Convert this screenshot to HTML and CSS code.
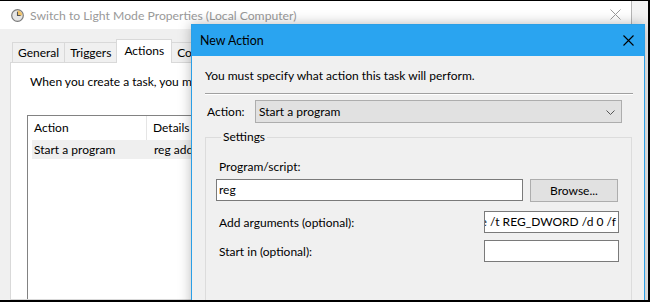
FILE: index.html
```html
<!DOCTYPE html>
<html>
<head>
<meta charset="utf-8">
<link rel="stylesheet" href="styles.css">
</head>
<body>
<div class="screen">
  <div class="bgwin">
    <div class="bg-title">
      <svg class="clock" width="13" height="13" viewBox="0 0 13 13">
        <circle cx="6.5" cy="6.5" r="5.8" fill="#e6e6e6" stroke="#7a7a7a" stroke-width="1.2"/>
        <path d="M6.5 6.5 V1.6 A4.9 4.9 0 0 1 11.4 6.5 Z" fill="#f2c46a"/>
        <path d="M6.5 2.8 V6.5 H9.6" fill="none" stroke="#555" stroke-width="1.1"/>
      </svg>
      <span class="bg-title-text">Switch to Light Mode Properties (Local Computer)</span>
      <svg class="bg-close" width="11" height="11" viewBox="0 0 11 11">
        <path d="M0.5 0.5 L10.5 10.5 M10.5 0.5 L0.5 10.5" stroke="#9a9a9a" stroke-width="1"/>
      </svg>
    </div>
    <div class="bg-body">
      <div class="tabs">
        <div class="tab">General</div>
        <div class="tab">Triggers</div>
        <div class="tab active">Actions</div>
        <div class="tab">Conditions</div>
        <div class="tab">Settings</div>
      </div>
      <div class="panel">
        <p class="intro">When you create a task, you must specify the action that will occur when your task starts.</p>
        <div class="table">
          <div class="thead">
            <div class="th c1">Action</div>
            <div class="th c2">Details</div>
          </div>
          <div class="trow">
            <div class="td c1">Start a program</div>
            <div class="td c2">reg add HKCU\Software\Microsoft</div>
          </div>
        </div>
      </div>
    </div>
  </div>

  <div class="dialog">
    <div class="dlg-title">
      <span class="dlg-title-text">New Action</span>
      <svg class="dlg-close" width="11" height="11" viewBox="0 0 11 11">
        <path d="M0.5 0.5 L10.5 10.5 M10.5 0.5 L0.5 10.5" stroke="#000" stroke-width="1.1"/>
      </svg>
    </div>
    <div class="dlg-body">
      <p class="dlg-intro">You must specify what action this task will perform.</p>
      <div class="sep"></div>
      <div class="action-row">
        <span class="action-label">Action:</span>
        <div class="combo">
          <span>Start a program</span>
          <svg class="chev" width="9" height="5" viewBox="0 0 9 5">
            <path d="M0.5 0.5 L4.5 4.5 L8.5 0.5" fill="none" stroke="#555" stroke-width="1"/>
          </svg>
        </div>
      </div>
      <fieldset class="group">
        <legend class="legend">Settings</legend>
        <div class="field-label">Program/script:</div>
        <div class="prog-row">
          <div class="input wide">reg</div>
          <div class="button">Browse...</div>
        </div>
        <div class="opt-row first">
          <span class="opt-label">Add arguments (optional):</span>
          <div class="input small args"><span>add HKCU\Software\Microsoft\Windows\CurrentVersion\Themes\Personalize /v AppsUseLightTheme /t REG_DWORD /d 0 /f</span></div>
        </div>
        <div class="opt-row">
          <span class="opt-label">Start in (optional):</span>
          <div class="input small"></div>
        </div>
      </fieldset>
    </div>
  </div>
</div>
</body>
</html>
```
FILE: styles.css
```css
* { box-sizing: border-box; }
html, body { margin: 0; padding: 0; }
body {
  font-family: Lato, "Noto Sans", sans-serif;
  font-size: 12px;
  color: #000;
  background: #000;
}
.screen {
  position: relative;
  width: 650px;
  height: 302px;
  overflow: hidden;
  border-top: 1px solid #000;
  border-right: 2px solid #000;
  border-bottom: 2px solid #000;
  background: #f3f3f3;
}
/* background window */
.bgwin {
  width: 632px;
  height: 100%;
  border-right: 1px solid #b5b5b5;
  background: #f0f0f0;
  display: flex;
  flex-direction: column;
}
.bg-title {
  flex: none;
  height: 28px;
  background: #fff;
  display: flex;
  align-items: center;
  padding-left: 11px;
}
.clock { flex: none; }
.bg-title-text {
  margin-left: 6px;
  font-size: 12.2px;
  color: #999;
  flex: 1;
}
.bg-close { margin-right: 10px; margin-top: -1px; }
.bg-body { flex: 1; display: flex; flex-direction: column; min-height: 0; }
.tabs {
  flex: none;
  display: flex;
  align-items: flex-end;
  padding-left: 12px;
  height: 33px;
}
.tab {
  height: 20px;
  padding: 0 5px;
  line-height: 19px;
  border: 1px solid #d9d9d9;
  border-bottom: none;
  margin-right: -1px;
  background: #f0f0f0;
  white-space: nowrap;
}
.tab.active {
  height: 24px;
  line-height: 21px;
  background: #fff;
  position: relative;
  z-index: 1;
  margin-bottom: -1px;
  padding: 0 7px;
}
.panel {
  flex: 1;
  margin-left: 10px;
  background: #fff;
  border: 1px solid #d9d9d9;
  padding: 11px 0 0 16px;
  overflow: hidden;
}
.intro {
  margin: 0;
  padding-left: 3px;
  line-height: 16px;
  white-space: nowrap;
}
.table {
  margin-top: 25px;
  width: 560px;
  height: 200px;
  border: 1px solid #828282;
}
.thead { display: flex; height: 24px; align-items: stretch; }
.th {
  line-height: 24px;
  padding-left: 6px;
}
.th.c1 { width: 119px; border-right: 1px solid #e5e5e5; }
.trow {
  display: flex;
  margin-left: 4px;
  height: 19px;
  line-height: 19px;
  background: #efefef;
}
.td.c1 { width: 115px; padding-left: 2px; }
.td.c2 { padding-left: 7px; }

/* dialog window (overlapping) */
.dialog {
  position: absolute;
  left: 191px;
  top: 23px;
  width: 454px;
  height: 290px;
  border: 1px solid #2b9fe6;
  background: #f0f0f0;
  box-shadow: 0 0 12px rgba(0,0,0,0.28);
  display: flex;
  flex-direction: column;
  overflow: hidden;
}
.dlg-title {
  flex: none;
  height: 31px;
  background: #2aa4f0;
  display: flex;
  align-items: center;
  padding-left: 8px;
}
.dlg-title-text { flex: 1; font-size: 12.4px; }
.dlg-close { margin-right: 10px; }
.dlg-body { flex: none; padding: 12px 11px 0 13px; }
.dlg-intro { margin: 0; line-height: 16px; }
.sep {
  margin-top: 9px;
  height: 2px;
  border-top: 1px solid #a0a0a0;
  border-bottom: 1px solid #fff;
}
.action-row {
  display: flex;
  align-items: center;
  margin-top: 5px;
  padding-left: 2px;
}
.action-label { width: 48px; }
.combo {
  width: 367px;
  height: 23px;
  background: #e1e1e1;
  border: 1px solid #adadad;
  display: flex;
  align-items: center;
  justify-content: space-between;
  padding: 0 6px 0 3px;
}
.chev { margin-top: 1px; }
.group {
  margin: 8px 0 0 0;
  width: 427px;
  height: 180px;
  border: 1px solid #dcdcdc;
  padding: 0 0 0 10px;
}
.legend {
  padding: 0 2px;
  margin-left: 5px;
  line-height: 12px;
}
.field-label {
  margin-top: 16px;
  padding-left: 3px;
  line-height: 16px;
}
.prog-row {
  display: flex;
  gap: 7px;
  margin-top: 4px;
  align-items: flex-start;
}
.input {
  height: 22px;
  background: #fff;
  border: 1px solid #7a7a7a;
  line-height: 20px;
  padding: 0 2px;
  white-space: nowrap;
  overflow: hidden;
}
.input.wide { width: 307px; }
.button {
  width: 88px;
  height: 23px;
  background: #e1e1e1;
  border: 1px solid #adadad;
  text-align: center;
  line-height: 21px;
}
.opt-row {
  display: flex;
  align-items: center;
  margin-top: 7px;
}
.opt-row.first { margin-top: 9px; }
.opt-label { width: 268px; padding-left: 3px; }
.input.small { width: 135px; }
.args {
  display: flex;
  justify-content: flex-end;
  padding-right: 2px;
}
.args span { flex: none; }
```
